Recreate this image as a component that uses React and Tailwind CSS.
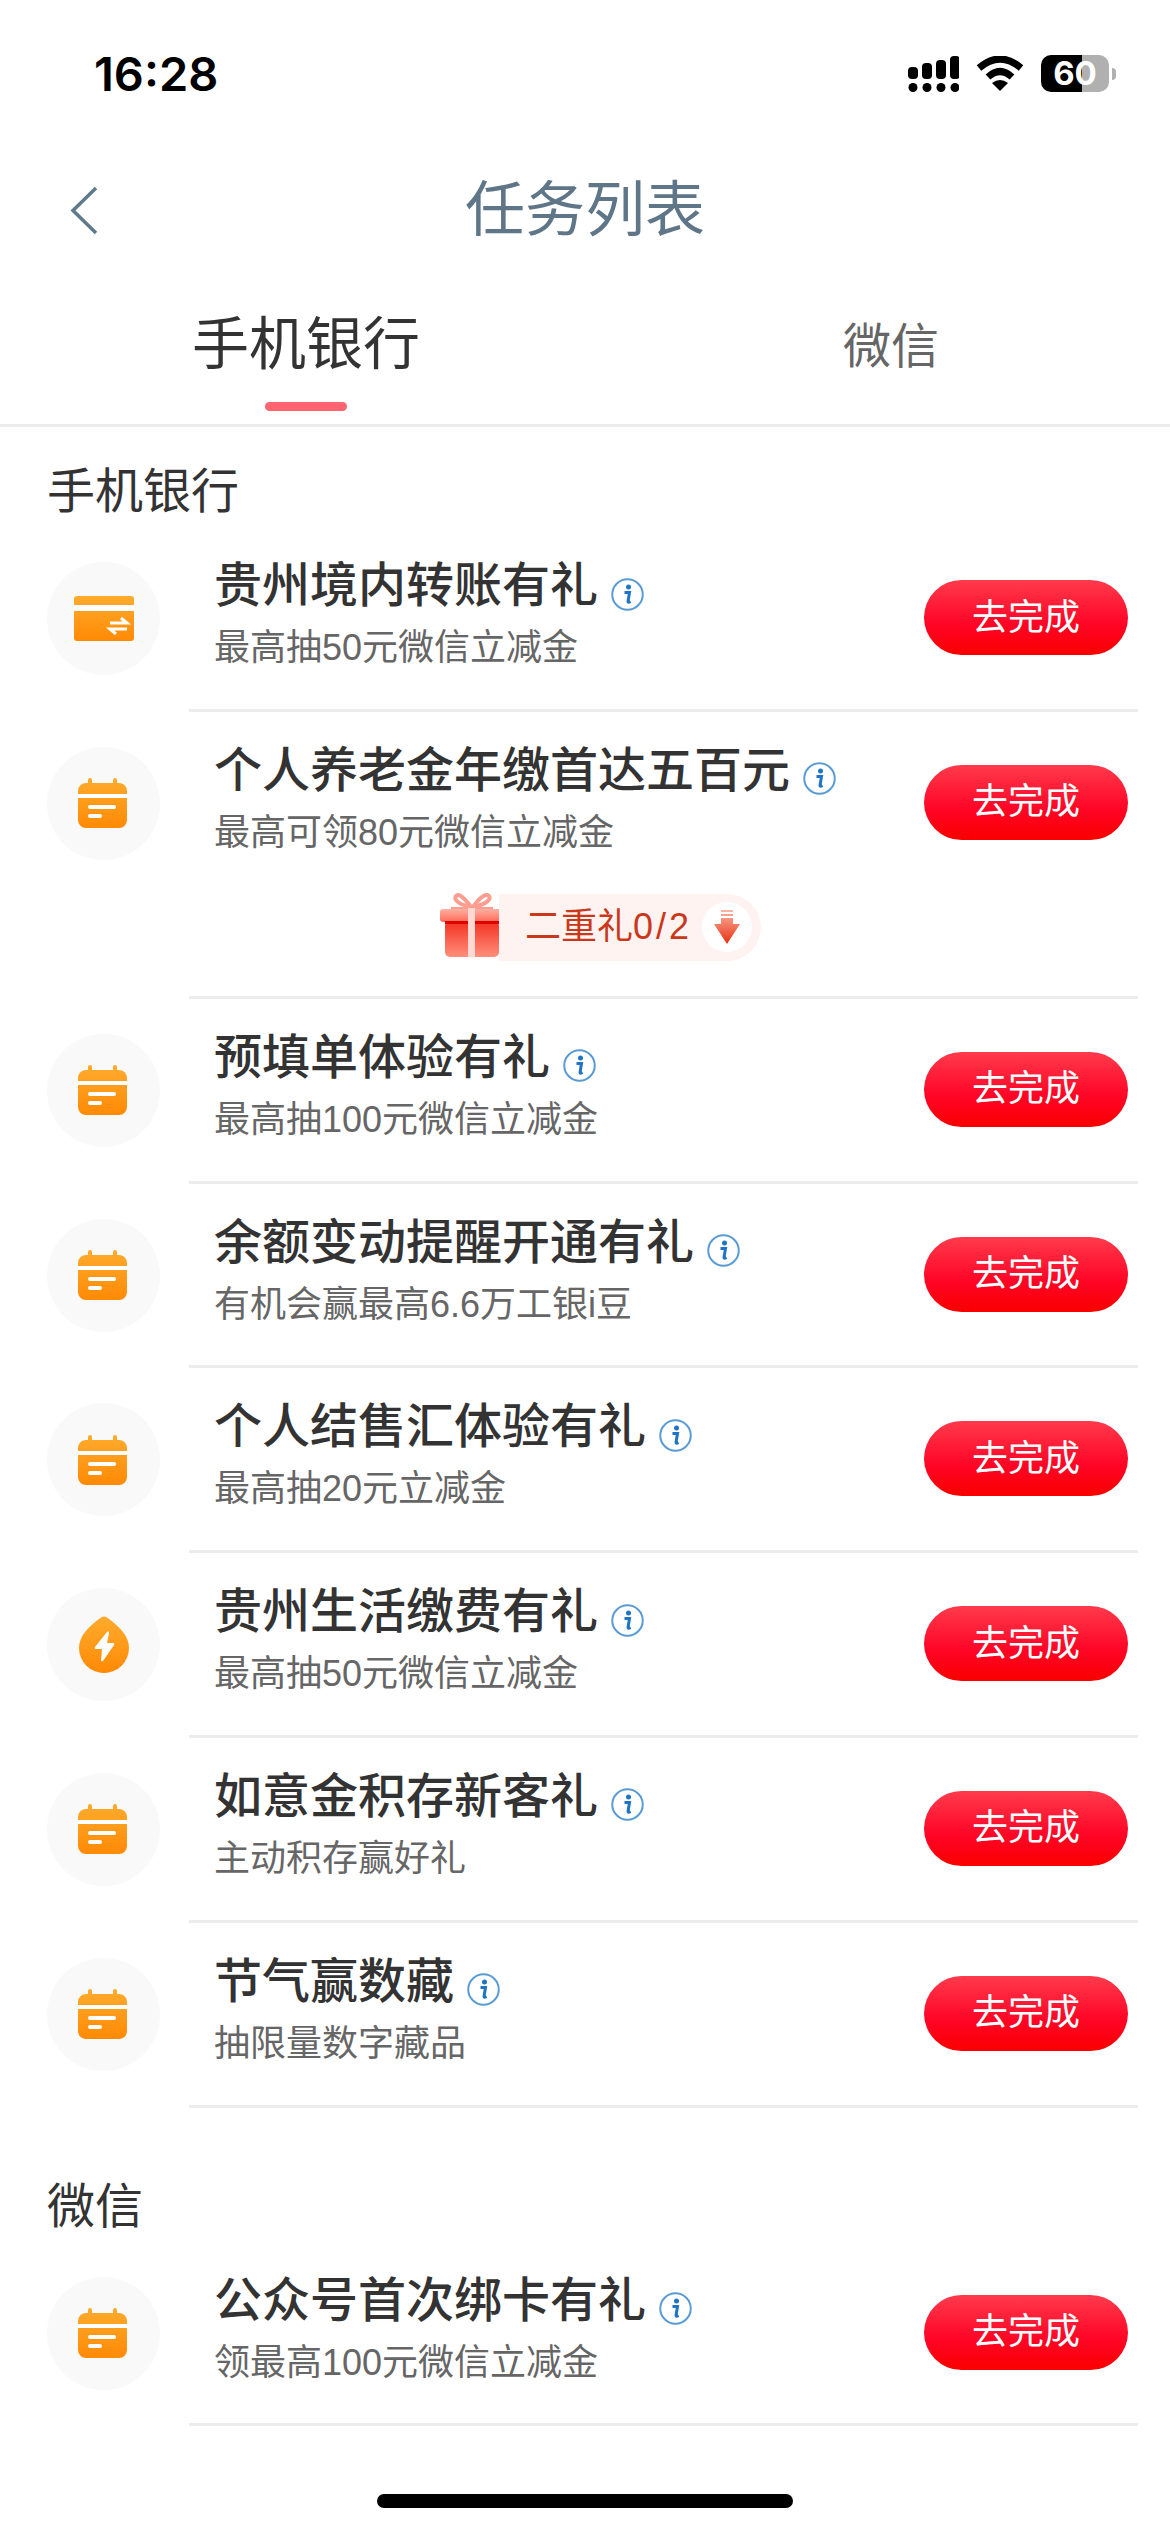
import React from 'react';

const bankTasks = [
  { title: '贵州境内转账有礼', sub: '最高抽50元微信立减金', icon: 'card' },
  { title: '个人养老金年缴首达五百元', sub: '最高可领80元微信立减金', icon: 'calendar', gift: true },
  { title: '预填单体验有礼', sub: '最高抽100元微信立减金', icon: 'calendar' },
  { title: '余额变动提醒开通有礼', sub: '有机会赢最高6.6万工银i豆', icon: 'calendar' },
  { title: '个人结售汇体验有礼', sub: '最高抽20元立减金', icon: 'calendar' },
  { title: '贵州生活缴费有礼', sub: '最高抽50元微信立减金', icon: 'drop' },
  { title: '如意金积存新客礼', sub: '主动积存赢好礼', icon: 'calendar' },
  { title: '节气赢数藏', sub: '抽限量数字藏品', icon: 'calendar' },
];

const wechatTasks = [{ title: '公众号首次绑卡有礼', sub: '领最高100元微信立减金', icon: 'calendar' }];

function OrangeGradient({ id }) {
  return (
    <linearGradient id={id} x1="0" y1="0" x2="0" y2="1">
      <stop offset="0" stopColor="#ffab2e" />
      <stop offset="1" stopColor="#ff8a05" />
    </linearGradient>
  );
}

function CardIcon() {
  return (
    <svg width="60" height="45" viewBox="0 0 60 45">
      <defs><OrangeGradient id="cardFill" /></defs>
      <rect width="60" height="45" rx="3" fill="url(#cardFill)" />
      <rect y="9" width="60" height="6" fill="#fff" />
      <path d="M36 27h17l-6-5M53 33H36l6 5" fill="none" stroke="#fff" strokeWidth="3" />
    </svg>
  );
}

function CalendarIcon() {
  return (
    <svg className="mr-[2px]" width="49" height="50" viewBox="0 0 49 50">
      <defs><OrangeGradient id="calFill" /></defs>
      <path d="M12 0a2 2 0 0 1 2 2v3h21V2a2 2 0 0 1 4 0v3h2a8 8 0 0 1 8 8v29a8 8 0 0 1-8 8H8a8 8 0 0 1-8-8V13a8 8 0 0 1 8-8h2V2a2 2 0 0 1 2-2z" fill="url(#calFill)" />
      <rect y="16" width="49" height="4" fill="#fff" />
      <rect x="10" y="27" width="28" height="4" rx="2" fill="#fff" />
      <rect x="10" y="36" width="14" height="4" rx="2" fill="#fff" />
    </svg>
  );
}

function DropIcon() {
  return (
    <svg width="50" height="57" viewBox="0 0 50 57">
      <defs><OrangeGradient id="dropFill" /></defs>
      <path d="M22 1.500Q25-.5 28 1.500C40 10 50 20 50 32A25 25 0 0 1 0 32C0 20 10 10 22 1.500z" fill="url(#dropFill)" />
      <path d="M28 16l-12 15q-1 2 1 2h6l-1 11q0 2 2 1l11-16q1-2-1-2h-6l2-10q0-3-2-1z" fill="#fff" />
    </svg>
  );
}

function TaskIcon({ type }) {
  return (
    <div className="flex h-[113px] w-[113px] shrink-0 items-center justify-center rounded-full bg-[#f9f9f9]">
      {type === 'card' && <CardIcon />}
      {type === 'calendar' && <CalendarIcon />}
      {type === 'drop' && <DropIcon />}
    </div>
  );
}

function InfoIcon() {
  return (
    <svg className="mt-[16px] ml-[13px] shrink-0" width="33" height="33" viewBox="0 0 33 33">
      <circle cx="16.500" cy="16.500" r="15.250" fill="none" stroke="#5b9bd5" strokeWidth="2" />
      <circle cx="17.500" cy="9" r="2.500" fill="#1f74c4" />
      <path d="M13.500 14.500h5l-1.500 9q0 1.500 2.500 0" fill="none" stroke="#1f74c4" strokeWidth="3" />
    </svg>
  );
}

function GiftIcon() {
  return (
    <svg className="shrink-0" width="64" height="64" viewBox="0 0 64 64">
      <defs>
        <linearGradient id="giftBody" x1="0" y1="0" x2="0" y2="1">
          <stop offset="0" stopColor="#f4301f" />
          <stop offset="1" stopColor="#ff8f7c" />
        </linearGradient>
        <linearGradient id="giftLid" x1="0" y1="0" x2="0" y2="1">
          <stop offset="0" stopColor="#ffb0a2" />
          <stop offset="1" stopColor="#ff6a58" />
        </linearGradient>
      </defs>
      <path d="M31 14C24 4 18 0 16 3c-3 4 4 9 15 11zM33 14C40 4 46 0 49 3c3 4-5 9-16 11z" fill="none" stroke="#ff9d90" strokeWidth="4" />
      <path d="M11 15h42" stroke="#ff9d90" strokeWidth="2" />
      <rect y="16" width="63" height="13" rx="3" fill="url(#giftLid)" />
      <rect x="5" y="28" width="54" height="36" rx="5" fill="url(#giftBody)" />
      <rect x="5" y="28" width="54" height="3" fill="#e00000" />
      <rect x="28" y="15" width="7" height="49" fill="#ffd9d2" />
    </svg>
  );
}

function GiftRow() {
  return (
    <div className="mt-[29px] ml-[226px] flex items-start">
      <GiftIcon />
      <div className="mt-[1px] ml-[-5px] flex h-[67px] w-[262px] shrink-0 items-center rounded-r-full bg-[#fff3f1] pr-[9px] pl-[26px]">
        <span className="flex-1 text-[36px] text-[#c9381b]">二重礼<span className="tracking-[3px]">0/2</span></span>
        <div className="flex h-[50px] w-[50px] items-center justify-center rounded-full bg-white">
          <svg width="26" height="34" viewBox="0 0 26 34">
            <defs>
              <linearGradient id="arrowFill" x1="0" y1="0" x2="0" y2="1">
                <stop offset="0" stopColor="#ffb5a5" />
                <stop offset="1" stopColor="#e5300f" />
              </linearGradient>
            </defs>
            <path d="M7 0h12v2H7zM7 4h12v2H7zM7 8h12v6h7L13 34 0 14h7z" fill="url(#arrowFill)" />
          </svg>
        </div>
      </div>
    </div>
  );
}

function TaskRow({ task }) {
  return (
    <div className="flex pr-[32px] pl-[47px]">
      <div className="pt-[35px]">
        <TaskIcon type={task.icon} />
      </div>
      <div className={`relative ml-[29px] min-w-0 flex-1 border-b-[3px] border-[#ececec] pl-[25px] ${task.gift ? 'h-[287px]' : 'h-[184.8px]'}`}>
        <div className="box-content flex h-[62px] items-center pt-[28px] text-[48px] leading-[62px] font-medium text-[#333]">
          <span>{task.title}</span>
          <InfoIcon />
        </div>
        <div className="text-[36px] leading-[62px] text-[#666]">{task.sub}</div>
        {task.gift && <GiftRow />}
        <button className="absolute top-[53px] right-[10px] h-[75px] w-[204px] rounded-full bg-[linear-gradient(180deg,#ff3a4c_0%,#ff0425_60%,#f90000_100%)] text-[36px] text-white">
          去完成
        </button>
      </div>
    </div>
  );
}

function StatusBar() {
  return (
    <div className="flex h-[150px] items-start justify-between pt-[49px] pr-[54px] pl-[94px]">
      <span className="font-['Inter'] text-[47px] leading-[50px] font-semibold text-black">16:28</span>
      <div className="mt-[6px] flex items-center">
        <svg width="51" height="36" viewBox="0 0 51 36">
          <rect x="0" y="11" width="10" height="12" rx="4" />
          <rect x="14" y="7" width="10" height="16" rx="4" />
          <rect x="28" y="4" width="10" height="19" rx="4" />
          <rect x="42" y="0" width="10" height="23" rx="4" />
          <circle cx="5" cy="31.500" r="4.500" />
          <circle cx="19" cy="31.500" r="4.500" />
          <circle cx="33" cy="31.500" r="4.500" />
          <circle cx="47" cy="31.500" r="4.500" />
        </svg>
        <svg className="ml-[17px]" width="48" height="36" viewBox="0 0 48 36">
          <path d="M3 12Q24-6 45 12" fill="none" stroke="#000" strokeWidth="7" />
          <path d="M12 21Q24 10 36 21" fill="none" stroke="#000" strokeWidth="7" />
          <path d="M24 35L16 27Q24 21 32 27z" />
        </svg>
        <div className="ml-[17px] flex h-[37px] w-[68px] items-center justify-center rounded-[10px] bg-[linear-gradient(90deg,#000_60%,#b0b0b0_60%)] font-['Inter'] text-[33px] font-bold text-white">
          60
        </div>
        <div className="ml-[3px] h-[12px] w-[4px] rounded-r-full bg-[#b0b0b0]" />
      </div>
    </div>
  );
}

export default function App() {
  return (
    <div className="flex h-[2532px] w-[1170px] flex-col overflow-hidden bg-white font-['Liberation_Sans','Noto_Sans_CJK_SC',sans-serif]">
      <StatusBar />

      <div className="relative flex h-[120px] items-center justify-center">
        <svg className="absolute top-[36px] left-[70px]" width="29" height="49" viewBox="0 0 29 49">
          <path d="M26 2L3 24.500 26 47" fill="none" stroke="#5f7a8c" strokeWidth="3.500" />
        </svg>
        <h1 className="mt-[2px] text-[60px] leading-[80px] font-normal text-[#5f7688]">任务列表</h1>
      </div>

      <div className="flex h-[157px] border-b-[3px] border-[#ececec]">
        <div className="flex w-[612px] flex-col items-center">
          <span className="mt-[40px] text-[57px] leading-[68px] text-[#333]">手机银行</span>
          <div className="mt-[24px] h-[9px] w-[82px] rounded-full bg-[#ff6470]" />
        </div>
        <div className="flex w-[558px] justify-center">
          <span className="mt-[43px] text-[48px] leading-[68px] text-[#666]">微信</span>
        </div>
      </div>

      <div className="flex h-[100px] items-end pb-[2px] pl-[47px] text-[48px] leading-[66px] text-[#333]">手机银行</div>
      {bankTasks.map((task) => (
        <TaskRow key={task.title} task={task} />
      ))}

      <div className="flex h-[134px] items-end pb-[2px] pl-[47px] text-[48px] leading-[66px] text-[#333]">微信</div>
      {wechatTasks.map((task) => (
        <TaskRow key={task.title} task={task} />
      ))}

      <div className="mx-auto mt-[68px] h-[14px] w-[416px] rounded-full bg-black" />
    </div>
  );
}
